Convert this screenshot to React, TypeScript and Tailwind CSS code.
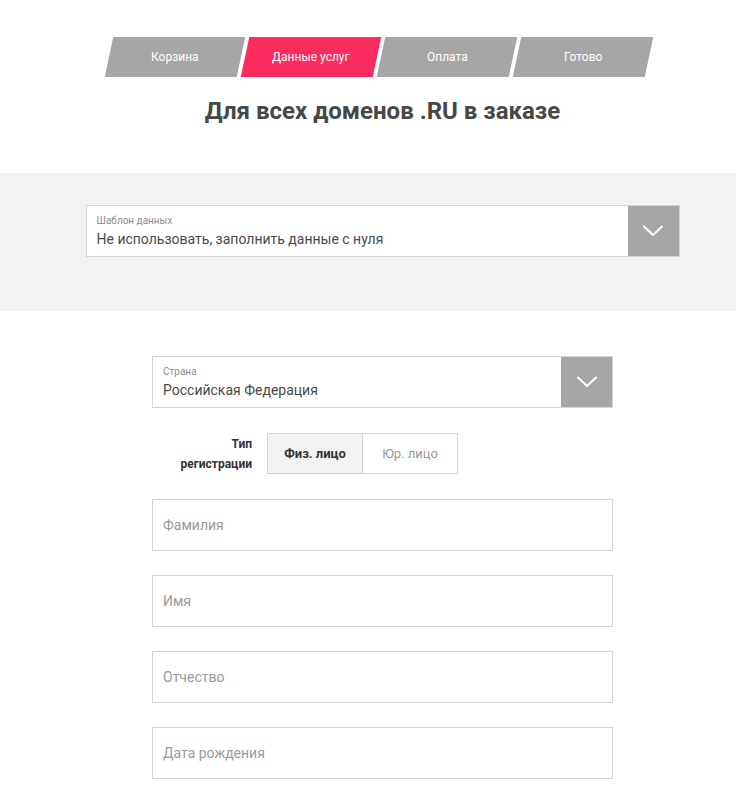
const STEPS = ['Корзина', 'Данные услуг', 'Оплата', 'Готово'];
const FIELDS = ['Фамилия', 'Имя', 'Отчество', 'Дата рождения'];

function Chevron() {
  return (
    <svg width="22" height="12" viewBox="0 0 22 12" fill="none">
      <path d="M2 1.5 L11 10 L20 1.5" stroke="white" strokeWidth="2" strokeLinecap="round" strokeLinejoin="round" />
    </svg>
  );
}

function SelectField({ label, value }: { label: string; value: string }) {
  return (
    <div className="flex h-[52px] border border-[#d4d4d4] bg-white">
      <div className="flex-1 flex flex-col justify-center pl-[10px] pt-[2px]">
        <span className="text-[10px] leading-[12px] text-[#8c8c8c]">{label}</span>
        <span className="text-[14px] leading-[20px] text-[#4a4a4a] mt-[2px]">{value}</span>
      </div>
      <div className="w-[51px] bg-[#a6a6a6] flex items-center justify-center">
        <Chevron />
      </div>
    </div>
  );
}

export default function App() {
  return (
    <div className="min-h-screen bg-white pb-6" style={{ fontFamily: 'Roboto, "Liberation Sans", sans-serif' }}>
      <div className="pt-[37px]">
        <div className="flex justify-center gap-[4px] pl-[21px]">
          {STEPS.map((s, i) => (
            <div key={s} className={`w-[132px] h-[40px] -skew-x-12 flex items-center justify-center ${i === 1 ? 'bg-[#fd2c5e]' : 'bg-[#a6a6a6]'}`}>
              <span className="skew-x-12 text-white text-[12px]">{s}</span>
            </div>
          ))}
        </div>
        <h1 className="pl-[29px] text-center text-[24px] leading-[30px] font-bold text-[#474747] mt-[19px]">Для всех доменов .RU в заказе</h1>
      </div>

      <div className="mt-[47px] bg-[#f2f2f2] h-[138px] pl-[29px] pt-[32px]">
        <div className="mx-auto w-[594px]">
          <SelectField label="Шаблон данных" value="Не использовать, заполнить данные с нуля" />
        </div>
      </div>

      <div className="pl-[29px] pt-[45px]">
        <div className="mx-auto w-[461px] flex flex-col">
          <SelectField label="Страна" value="Российская Федерация" />
          <div className="flex items-center mt-[25px]">
            <div className="w-[115px] text-right text-[12px] leading-[20px] font-bold text-[#333333] pr-[15px]">
              Тип<br />регистрации
            </div>
            <div className="flex h-[41px] border border-[#d4d4d4]">
              <div className="w-[95px] bg-[#f2f2f2] border-r border-[#d4d4d4] flex items-center justify-center text-[13px] font-bold text-[#333333]">Физ. лицо</div>
              <div className="w-[94px] bg-white flex items-center justify-center text-[13px] text-[#999999]">Юр. лицо</div>
            </div>
          </div>
          <div className="flex flex-col gap-[24px] mt-[25px]">
            {FIELDS.map((f) => (
              <div key={f} className="h-[52px] border border-[#d4d4d4] bg-white flex items-center pl-[10px]">
                <span className="text-[14px] text-[#9a9a9a]">{f}</span>
              </div>
            ))}
          </div>
        </div>
      </div>
    </div>
  );
}
